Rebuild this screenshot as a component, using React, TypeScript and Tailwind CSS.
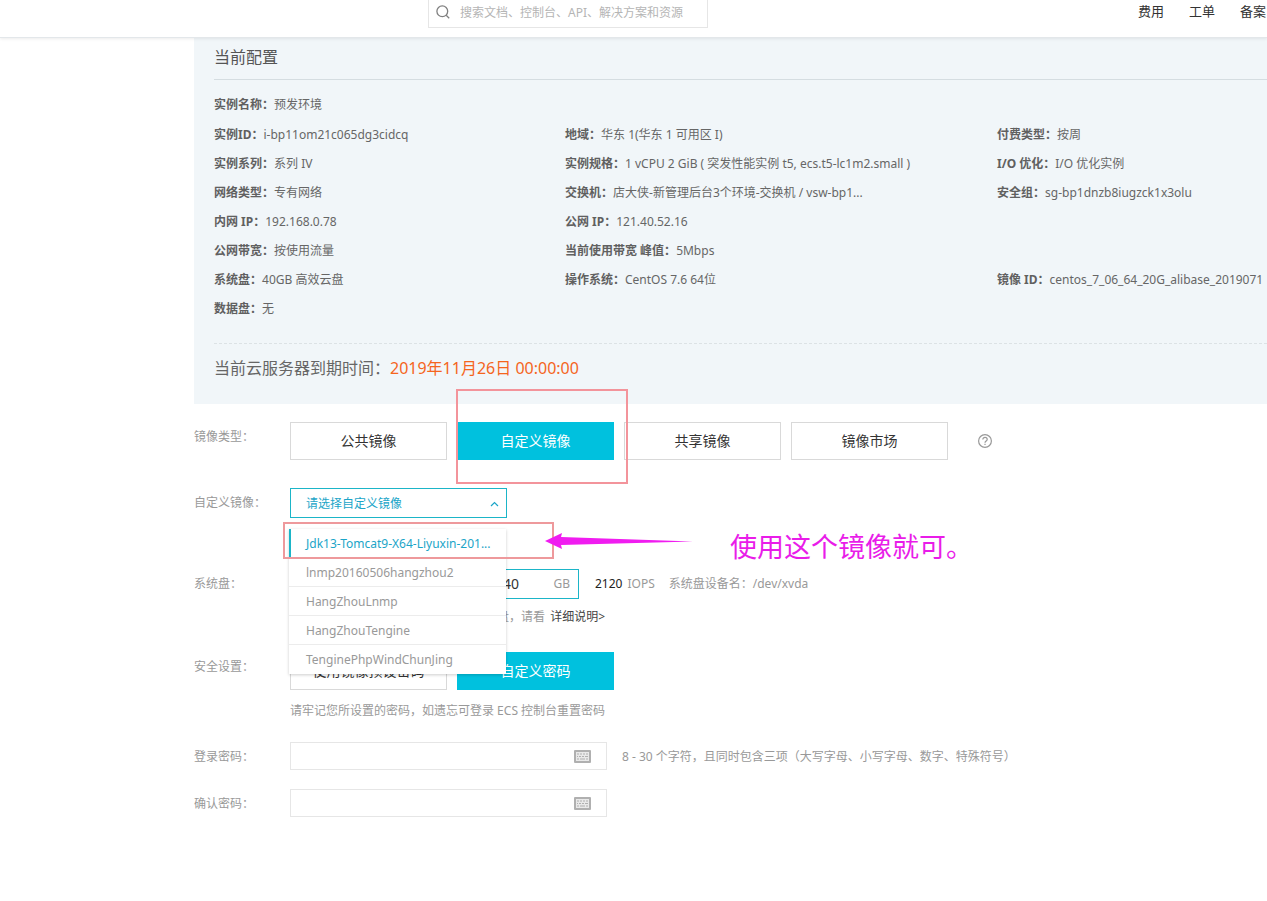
import React, { useState } from 'react'

type Item = {
    label: string
    value: string
}

const configRows: (Item | null)[][] = [
    [{ label: '实例名称：', value: '预发环境' }, null, null],
    [
        { label: '实例ID：', value: 'i-bp11om21c065dg3cidcq' },
        { label: '地域：', value: '华东 1(华东 1 可用区 I)' },
        { label: '付费类型：', value: '按周' },
    ],
    [
        { label: '实例系列：', value: '系列 IV' },
        { label: '实例规格：', value: '1 vCPU 2 GiB ( 突发性能实例 t5, ecs.t5-lc1m2.small )' },
        { label: 'I/O 优化：', value: 'I/O 优化实例' },
    ],
    [
        { label: '网络类型：', value: '专有网络' },
        { label: '交换机：', value: '店大侠-新管理后台3个环境-交换机 / vsw-bp1...' },
        { label: '安全组：', value: 'sg-bp1dnzb8iugzck1x3olu' },
    ],
    [{ label: '内网 IP：', value: '192.168.0.78' }, { label: '公网 IP：', value: '121.40.52.16' }, null],
    [{ label: '公网带宽：', value: '按使用流量' }, { label: '当前使用带宽 峰值：', value: '5Mbps' }, null],
    [
        { label: '系统盘：', value: '40GB 高效云盘' },
        { label: '操作系统：', value: 'CentOS 7.6 64位' },
        { label: '镜像 ID：', value: 'centos_7_06_64_20G_alibase_2019071' },
    ],
    [{ label: '数据盘：', value: '无' }, null, null],
]

const imageTypes = ['公共镜像', '自定义镜像', '共享镜像', '镜像市场']

const customImages = [
    'Jdk13-Tomcat9-X64-Liyuxin-201...',
    'lnmp20160506hangzhou2',
    'HangZhouLnmp',
    'HangZhouTengine',
    'TenginePhpWindChunJing',
]

const KeyboardIcon = () => (
    <svg className="h-[13px] w-[17px]" viewBox="0 0 17 13" aria-hidden="true">
        <rect width="17" height="13" rx="1" fill="#b0b0b0" />
        <rect x="2" y="2" width="13" height="9" fill="#e9e9e9" />
        <path d="M3 4h2M6 4h2M9 4h2M12 4h2M3 6.5h1M5 6.5h2M8 6.5h2M11 6.5h3M3 9h2M6 9h5M12 9h2" stroke="#b0b0b0" strokeWidth="1.2" />
    </svg>
)

const Header = () => (
    <header className="relative z-10 flex h-[38px] items-start border-b border-[#e3e7ea] bg-white shadow-[0_1px_3px_rgba(0,0,0,0.08)]">
        <div className="flex flex-1 justify-start pl-[428px]">
            <label className="flex h-7 w-[280px] items-center border border-t-0 border-[#e6e6e6] pb-[3px] pl-[7px]">
                <svg className="h-[14px] w-[14px] shrink-0" viewBox="0 0 14 14" fill="none" stroke="#808080" strokeWidth="1.3" aria-hidden="true">
                    <circle cx="6.3" cy="6.3" r="5.4" />
                    <path d="M10.2 10.2 13.2 13.2" />
                </svg>
                <input type="text" aria-label="搜索" placeholder="搜索文档、控制台、API、解决方案和资源" className="ml-[10px] w-full pt-px text-xs placeholder-[#b5b5b5] outline-none" />
            </label>
        </div>
        <nav className="flex gap-[25px] pr-px text-[13px] leading-[22px] text-[#333]">
            <a href="#">费用</a>
            <a href="#">工单</a>
            <a href="#">备案</a>
        </nav>
    </header>
)

const CurrentConfig = () => (
    <section className="overflow-hidden bg-[#f1f6f9] pl-5 text-[#666]">
        <h2 className="h-[42px] border-b border-[#d5dde1] text-base leading-[38px] text-[#555]">当前配置</h2>
        <div className="border-b border-dashed border-[#dce2e5] pt-[10px] pb-5">
            {configRows.map((row, i) => (
                <dl key={i} className="grid grid-cols-[39fr_48fr_30fr] leading-[29px] whitespace-nowrap first:mb-px">
                    {row.map((item, j) => (
                        <div key={j} className="flex min-h-[29px] min-w-0">
                            {item && <dt className="font-bold text-[#606060]">{item.label}</dt>}
                            {item && <dd>{item.value}</dd>}
                        </div>
                    ))}
                </dl>
            ))}
        </div>
        <p className="pb-3 text-base leading-[48px]">
            当前云服务器到期时间：<span className="text-[#f5651d]">2019年11月26日 00:00:00</span>
        </p>
    </section>
)

type RowProps = {
    label: string
    htmlFor?: string
    className: string
    children: React.ReactNode
}

const FormRow = ({ label, htmlFor, className, children }: RowProps) => (
    <div className={`flex ${className}`}>
        <label htmlFor={htmlFor} className="w-24 shrink-0 leading-[30px] text-[#999]">{label}</label>
        <div className="min-w-0 flex-1">{children}</div>
    </div>
)

const tabClass = 'h-[38px] w-[157px] border text-sm'
const tabOn = 'border-[#00c1de] bg-[#00c1de] text-white'
const tabOff = 'border-[#d9d9d9] bg-white text-[#333]'

const ImageSelect = () => {
    const [open, setOpen] = useState(true)
    const [value, setValue] = useState('')
    return (
        <div className="relative w-[217px]">
            <select
                id="image"
                value={value}
                onChange={(e) => setValue(e.target.value)}
                onMouseDown={(e) => { e.preventDefault(); setOpen(!open) }}
                className="block h-[30px] w-full appearance-none border border-[#1bb5c8] bg-white px-[15px] pt-[2px] text-[#1ba5c8] outline-none"
            >
                <option value="">请选择自定义镜像</option>
                {customImages.map((name) => <option key={name}>{name}</option>)}
            </select>
            <svg className="pointer-events-none absolute top-3 right-2 h-2 w-[9px]" viewBox="0 0 9 8" fill="none" stroke="#1ba5c8" strokeWidth="1.2" aria-hidden="true">
                <path d="M1 6 4.5 2.5 8 6" />
            </svg>
            {open && (
                <ul role="listbox" aria-label="自定义镜像" className="absolute top-[41px] -left-px z-10 w-[217px] bg-white shadow-[0_1px_3px_rgba(0,0,0,0.2)]">
                    {customImages.map((name, i) => (
                        <li
                            key={name}
                            role="option"
                            aria-selected={i === 0}
                            onClick={() => { setValue(name); setOpen(false) }}
                            className={`h-[29px] truncate border-b border-[#ececec] leading-[30px] last:border-b-0 ${i === 0 ? 'border-l-2 border-l-[#1bb5c8] pl-[15px] text-[#1ba5c8]' : 'pl-[17px] text-[#999]'}`}
                        >
                            {name}
                        </li>
                    ))}
                </ul>
            )}
            {/* callout for the recommended image */}
            <div className="pointer-events-none absolute top-[34px] -left-[7px] z-20 h-[37px] w-[271px] border-2 border-[#ee999c]" />
            <svg className="pointer-events-none absolute top-[45px] left-[255px] z-20 h-4 w-[149px]" viewBox="0 0 149 16" aria-hidden="true">
                <path d="M0 8 17 0 16 4 148 8.5 16 12 17 16Z" fill="#f01cf0" />
            </svg>
            <p className="pointer-events-none absolute top-[41px] left-[440px] z-20 text-[27px] leading-9 whitespace-nowrap text-[#e91ce9]">使用这个镜像就可。</p>
        </div>
    )
}

const PasswordInput = ({ id }: { id: string }) => (
    <div className="flex h-7 w-[317px] items-center border border-[#e6e6e6] pr-[15px]">
        <input id={id} type="password" className="h-full min-w-0 flex-1 px-2 outline-none" />
        <KeyboardIcon />
    </div>
)

const App = () => {
    const [imageType, setImageType] = useState('自定义镜像')
    return (
        <div className="min-h-screen overflow-x-hidden bg-white font-['Noto_Sans','Noto_Sans_CJK_SC',sans-serif] text-xs">
            <Header />
            <main className="pl-[194px]">
                <CurrentConfig />
                <form className="pb-20">
                    <FormRow label="镜像类型：" className="mt-[18px]">
                        <div className="flex items-center gap-[10px]">
                            {imageTypes.map((name) => (
                                <div key={name} className="relative">
                                    <button type="button" onClick={() => setImageType(name)} className={`${tabClass} ${name === imageType ? tabOn : tabOff}`}>
                                        {name}
                                    </button>
                                    {name === '自定义镜像' && (
                                        <div className="pointer-events-none absolute -top-[33px] -right-[14px] -bottom-6 -left-px z-10 border-2 border-[#f3949b]" />
                                    )}
                                </div>
                            ))}
                            <button type="button" aria-label="帮助" className="ml-5">
                                <svg className="h-[14px] w-[14px]" viewBox="0 0 14 14" fill="none" stroke="#999" strokeWidth="1.2" aria-hidden="true">
                                    <circle cx="7" cy="7" r="6.4" />
                                    <path d="M4.8 5.6C4.8 4.2 5.8 3.4 7 3.4s2.2.8 2.2 2C9.2 6.9 7 7 7 8.7M7 9.8v1.3" />
                                </svg>
                            </button>
                        </div>
                    </FormRow>
                    <FormRow label="自定义镜像：" htmlFor="image" className="mt-7">
                        <ImageSelect />
                    </FormRow>
                    <FormRow label="系统盘：" htmlFor="disk-size" className="mt-[51px]">
                        <div className="flex items-center text-[#999]">
                            <select aria-label="系统盘类型" className="h-[30px] w-[190px] appearance-none border border-[#ddd] bg-white px-[15px]">
                                <option>高效云盘</option>
                            </select>
                            <div className="ml-[10px] flex h-[30px] w-[89px] items-center border border-[#1bb5c8] pr-2">
                                <input id="disk-size" type="text" defaultValue="40" className="w-full min-w-0 pl-3 text-sm text-[#333] outline-none" />
                                <span>GB</span>
                            </div>
                            <span className="ml-4 text-[#222]">2120</span>
                            <span className="ml-[5px]">IOPS</span>
                            <span className="ml-[14px]">系统盘设备名：/dev/xvda</span>
                        </div>
                        <p className="mt-[6px] leading-6 text-[#999]">
                            如何选择 最适合您业务需求的高效系统盘，请看<a href="#" className="ml-[5px] text-[#444]">详细说明&gt;</a>
                        </p>
                    </FormRow>
                    <FormRow label="安全设置：" className="mt-[23px]">
                        <div className="flex gap-[10px]">
                            <button type="button" className={`${tabClass} ${tabOff}`}>使用镜像预设密码</button>
                            <button type="button" className={`${tabClass} ${tabOn}`}>自定义密码</button>
                        </div>
                        <p className="mt-[11px] leading-5 text-[#999]">请牢记您所设置的密码，如遗忘可登录 ECS 控制台重置密码</p>
                    </FormRow>
                    <FormRow label="登录密码：" htmlFor="password" className="mt-[21px]">
                        <div className="flex gap-[15px] leading-[30px] text-[#999]">
                            <PasswordInput id="password" />
                            <span>8 - 30 个字符，且同时包含三项（大写字母、小写字母、数字、特殊符号）</span>
                        </div>
                    </FormRow>
                    <FormRow label="确认密码：" htmlFor="confirm" className="mt-[17px]">
                        <PasswordInput id="confirm" />
                    </FormRow>
                </form>
            </main>
        </div>
    )
}

export default App
